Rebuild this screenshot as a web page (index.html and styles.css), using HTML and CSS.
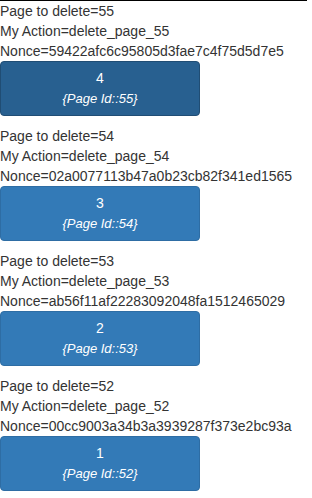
FILE: index.html
```html
<!DOCTYPE html>
<html lang="en">
<head>
    <meta charset="UTF-8">
    <title>Delete pages</title>
    <link rel="stylesheet" href="styles.css">
</head>
<body>
    <div id="page-list">
        <div class="page-item">
            <div>Page to delete=55</div>
            <div>My Action=delete_page_55</div>
            <div>Nonce=59422afc6c95805d3fae7c4f75d5d7e5</div>
            <button class="btn btn-primary active">4<br><i>{Page Id::55}</i></button>
        </div>
        <div class="page-item">
            <div>Page to delete=54</div>
            <div>My Action=delete_page_54</div>
            <div>Nonce=02a0077113b47a0b23cb82f341ed1565</div>
            <button class="btn btn-primary">3<br><i>{Page Id::54}</i></button>
        </div>
        <div class="page-item">
            <div>Page to delete=53</div>
            <div>My Action=delete_page_53</div>
            <div>Nonce=ab56f11af22283092048fa1512465029</div>
            <button class="btn btn-primary">2<br><i>{Page Id::53}</i></button>
        </div>
        <div class="page-item">
            <div>Page to delete=52</div>
            <div>My Action=delete_page_52</div>
            <div>Nonce=00cc9003a34b3a3939287f373e2bc93a</div>
            <button class="btn btn-primary">1<br><i>{Page Id::52}</i></button>
        </div>
    </div>
</body>
</html>
```
FILE: styles.css
```css
* {box-sizing: border-box;}
body {
    margin: 0;
    font-family: "Liberation Sans", Arial, sans-serif;
    font-size: 14px;
    line-height: 20px;
    color: #333;
    background: #fff;
}
#page-list {
    width: 307px;
    border-top: 1px solid #000;
}
.page-item {margin-bottom: 10px;}

.btn {
    display: block;
    width: 200px;
    padding: 6px 12px;
    font-family: inherit;
    font-size: 14px;
    line-height: 20px;
    text-align: center;
    border: 1px solid transparent;
    border-radius: 4px;
    cursor: pointer;
}
.btn i {font-size: 13px;}
.btn-primary {
    color: #fff;
    background-color: #337ab7;
    border-color: #2e6da4;
}
.btn-primary.active {
    background-color: #286090;
    border-color: #204d74;
}
```
